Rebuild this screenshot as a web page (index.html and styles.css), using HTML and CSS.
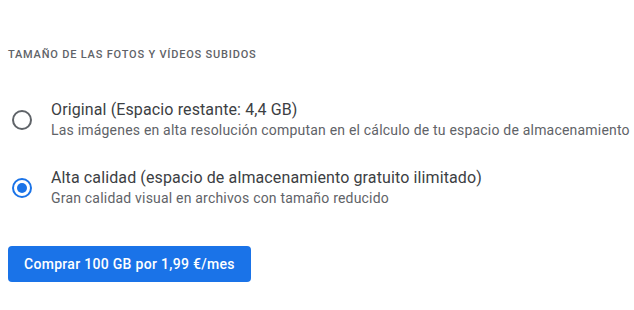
FILE: index.html
```html
<!DOCTYPE html>
<html lang="es">
<head>
<meta charset="utf-8">
<link rel="stylesheet" href="styles.css">
</head>
<body>
<section class="settings">
  <h2 class="heading">Tamaño de las fotos y vídeos subidos</h2>
  <div class="options">
    <label class="option">
      <span class="radio"></span>
      <span class="texts">
        <span class="title">Original (Espacio restante: 4,4 GB)</span>
        <span class="desc">Las imágenes en alta resolución computan en el cálculo de tu espacio de almacenamiento</span>
      </span>
    </label>
    <label class="option">
      <span class="radio checked"></span>
      <span class="texts">
        <span class="title">Alta calidad (espacio de almacenamiento gratuito ilimitado)</span>
        <span class="desc">Gran calidad visual en archivos con tamaño reducido</span>
      </span>
    </label>
  </div>
  <button class="buy">Comprar 100 GB por 1,99 €/mes</button>
</section>
</body>
</html>
```
FILE: styles.css
```css
html, body {
  margin: 0;
  padding: 0;
  background: #ffffff;
  overflow: hidden;
}
body {
  font-family: Roboto, "Liberation Sans", Arial, sans-serif;
  color: #3c4043;
}
.settings {
  padding: 47px 8px 0 8px;
  display: flex;
  flex-direction: column;
  align-items: flex-start;
}
.heading {
  margin: 0;
  font-size: 11px;
  line-height: 16px;
  font-weight: 500;
  letter-spacing: 0.8px;
  text-transform: uppercase;
  color: #5f6368;
}
.options {
  margin-top: 37px;
  display: flex;
  flex-direction: column;
  gap: 28px;
}
.option {
  display: flex;
  align-items: center;
  gap: 19px;
}
.radio {
  box-sizing: border-box;
  width: 20px;
  height: 20px;
  margin-left: 4px;
  border: 2px solid #5f6368;
  border-radius: 50%;
  display: flex;
  align-items: center;
  justify-content: center;
  flex: none;
}
.radio.checked {
  border-color: #1a73e8;
}
.radio.checked::after {
  content: "";
  width: 10px;
  height: 10px;
  border-radius: 50%;
  background: #1a73e8;
}
.texts {
  display: flex;
  flex-direction: column;
  white-space: nowrap;
}
.title {
  font-size: 16px;
  line-height: 20px;
  letter-spacing: 0.12px;
  color: #3c4043;
}
.desc {
  font-size: 14px;
  line-height: 20px;
  letter-spacing: 0.2px;
  color: #5f6368;
}
.buy {
  margin-top: 38px;
  height: 36px;
  padding: 0 16px 0 16px;
  border: none;
  border-radius: 4px;
  background: #1a73e8;
  color: #ffffff;
  font-family: Roboto, "Liberation Sans", Arial, sans-serif;
  font-size: 14px;
  font-weight: 500;
  letter-spacing: 0.3px;
  white-space: nowrap;
}
```
